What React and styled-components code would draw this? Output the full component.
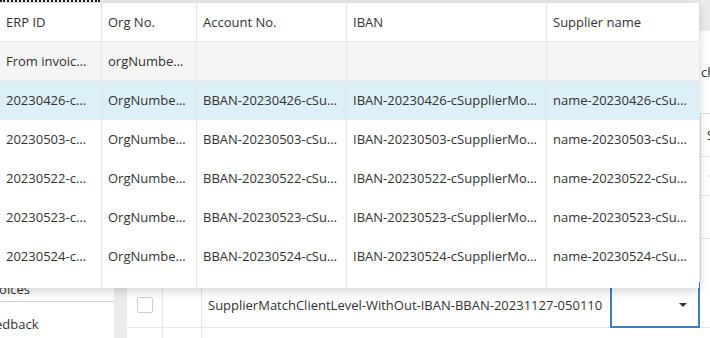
import React from 'react'
import styled, { createGlobalStyle } from 'styled-components'

const GlobalStyle = createGlobalStyle`
    html, body{
        margin:0;
        padding:0;
        overflow:hidden;
    }
    body{
        font-family:"Open Sans", "Liberation Sans", sans-serif;
        font-size:13px;
        color:#333;
        background-color:#ececec;
    }
    *{ box-sizing:border-box; }
`

const columns = [
    { key:'erp', title:'ERP ID', filter:'From invoice ERP ID', width:102 },
    { key:'org', title:'Org No.', filter:'orgNumber from invoice', width:95 },
    { key:'bban', title:'Account No.', filter:'', width:150 },
    { key:'iban', title:'IBAN', filter:'', width:200 },
    { key:'name', title:'Supplier name', filter:'', width:152 },
]

const dates = ['20230426', '20230503', '20230522', '20230523', '20230524', '20230525']

const rows = dates.map(d => ({
    erp:`${d}-cMoreThanOneSupplier`,
    org:`OrgNumber-${d}-cSupplierMoreThanOne`,
    bban:`BBAN-${d}-cSupplierMoreThanOne`,
    iban:`IBAN-${d}-cSupplierMoreThanOne`,
    name:`name-${d}-cSupplierMoreThanOne`,
}))

const gridCols = columns.map(c => `${c.width}px`).join(' ')

const App = () => {
    return (
        <>
            <GlobalStyle />
            <PageStyle>
                <TopBar>
                    <FocusTab />
                </TopBar>

                <Body>
                    <Sidebar>
                        <NavItem divider>Invoices</NavItem>
                        <NavItem gap>Feedback</NavItem>
                    </Sidebar>

                    <Main>
                        <Upper>
                            <div />
                            <SidePanel>
                                <PanelTitle>choose supplier</PanelTitle>
                                <PanelBox>
                                    <PanelRow>Supplier</PanelRow>
                                    <PanelRow muted>
                                        <svg width="14" height="14" viewBox="0 0 24 24" fill="none" stroke="#c4c4c4" strokeWidth="2.2" strokeLinecap="round">
                                            <circle cx="11" cy="11" r="7" />
                                            <path d="M20 20l-4-4" />
                                        </svg>
                                    </PanelRow>
                                    <PanelRow />
                                </PanelBox>
                            </SidePanel>
                        </Upper>

                        <TableRow>
                            <CheckCell><Checkbox /></CheckCell>
                            <BodyCell />
                            <BodyCell text>SupplierMatchClientLevel-WithOut-IBAN-BBAN-20231127-050110</BodyCell>
                            <SelectCell>
                                <SelectBox>
                                    <Caret />
                                </SelectBox>
                            </SelectCell>
                        </TableRow>
                        <TableRow>
                            <CheckCell />
                            <BodyCell />
                            <BodyCell text />
                            <SelectCell />
                        </TableRow>
                    </Main>
                </Body>

                <DropdownStyle>
                    <GridRow kind="head">
                        {columns.map(c => <Cell key={c.key}>{c.title}</Cell>)}
                    </GridRow>
                    <GridRow kind="filter">
                        {columns.map(c => <Cell key={c.key} filter>{c.filter}</Cell>)}
                    </GridRow>
                    {rows.map((r, ind) => (
                        <GridRow key={ind} active={ind === 0}>
                            {columns.map(c => <Cell key={c.key}>{r[c.key]}</Cell>)}
                        </GridRow>
                    ))}
                </DropdownStyle>
            </PageStyle>
        </>
    )
}

export default App

const PageStyle = styled.div`
    position:relative;
    width:710px;
    height:338px;
    overflow:hidden;
    display:flex;
    flex-direction:column;
    background-color:#ececec;
`
const TopBar = styled.div`
    height:31px;
    flex-shrink:0;
    background-color:#ebebeb;
`
const FocusTab = styled.div`
    width:100px;
    border-top:2px dotted #222;
`
const Body = styled.div`
    flex:1;
    display:flex;
    min-height:0;
`
const Sidebar = styled.div`
    width:114px;
    flex-shrink:0;
    background-color:#fff;
    padding-top:246px;
    overflow:hidden;
`
const NavItem = styled.div`
    margin-left:-35px;
    padding-left:16px;
    line-height:24px;
    white-space:nowrap;
    color:#333;
    padding-top:${p => p.gap ? '10px' : '0'};
    border-bottom:${p => p.divider ? '1px solid #cfcfcf' : 'none'};
`
const Main = styled.div`
    flex:1;
    margin-left:13px;
    background-color:#fff;
    display:flex;
    flex-direction:column;
    min-width:0;
`
const Upper = styled.div`
    height:251px;
    flex-shrink:0;
    display:grid;
    grid-template-columns:573px 1fr;
`
const SidePanel = styled.div`
    display:flex;
    flex-direction:column;
    overflow:hidden;
`
const PanelTitle = styled.div`
    height:82px;
    display:flex;
    align-items:center;
    padding-left:1px;
    white-space:nowrap;
`
const PanelBox = styled.div`
    flex:1;
    border-left:1px solid #dedede;
    border-top:1px solid #dedede;
`
const PanelRow = styled.div`
    height:${p => p.muted ? '39px' : '43px'};
    display:flex;
    align-items:center;
    padding-left:6px;
    border-bottom:1px solid #e3e3e3;
    white-space:nowrap;
    color:${p => p.muted ? '#c4c4c4' : '#333'};
`
const TableRow = styled.div`
    display:flex;
    height:46px;
    flex-shrink:0;
    border-bottom:1px solid #e6e6e6;
`
const CheckCell = styled.div`
    width:36px;
    flex-shrink:0;
    display:flex;
    align-items:center;
    justify-content:center;
    border-right:1px solid #e6e6e6;
`
const Checkbox = styled.div`
    width:16px;
    height:16px;
    border:1px solid #cfcfcf;
    border-radius:2px;
    background-color:#fff;
`
const BodyCell = styled.div`
    width:${p => p.text ? '408px' : '39px'};
    flex-shrink:0;
    display:flex;
    align-items:center;
    padding-left:6px;
    white-space:nowrap;
    border-right:${p => p.text ? 'none' : '1px solid #e6e6e6'};
`
const SelectCell = styled.div`
    width:90px;
    flex-shrink:0;
`
const SelectBox = styled.div`
    height:46px;
    border:2px solid #3f7fc1;
    display:flex;
    align-items:center;
    justify-content:flex-end;
    padding-right:11px;
    background-color:#fff;
`
const Caret = styled.span`
    width:0;
    height:0;
    border-left:4px solid transparent;
    border-right:4px solid transparent;
    border-top:4px solid #333;
`
const DropdownStyle = styled.div`
    position:absolute;
    top:3px;
    left:0;
    width:699px;
    height:285px;
    z-index:10;
    overflow:hidden;
    background-color:#fff;
    box-shadow:0 3px 10px rgba(0,0,0,0.18);
`
const GridRow = styled.div`
    display:grid;
    grid-template-columns:${gridCols};
    height:39px;
    line-height:${p => p.kind === 'head' ? '39px' : '38px'};
    background-color:${p => p.active ? '#ddf0f7' : p.kind === 'filter' ? '#f5f5f5' : '#fff'};
    border-bottom:${p => p.kind ? '1px solid #e6e6e6' : 'none'};
`
const Cell = styled.div`
    min-width:0;
    padding:${p => p.filter ? '0 10px 0 6px' : '0 6px'};
    white-space:nowrap;
    overflow:hidden;
    text-overflow:ellipsis;
    border-right:1px solid #e6e6e6;
    &:last-child{ border-right:none; }
`
